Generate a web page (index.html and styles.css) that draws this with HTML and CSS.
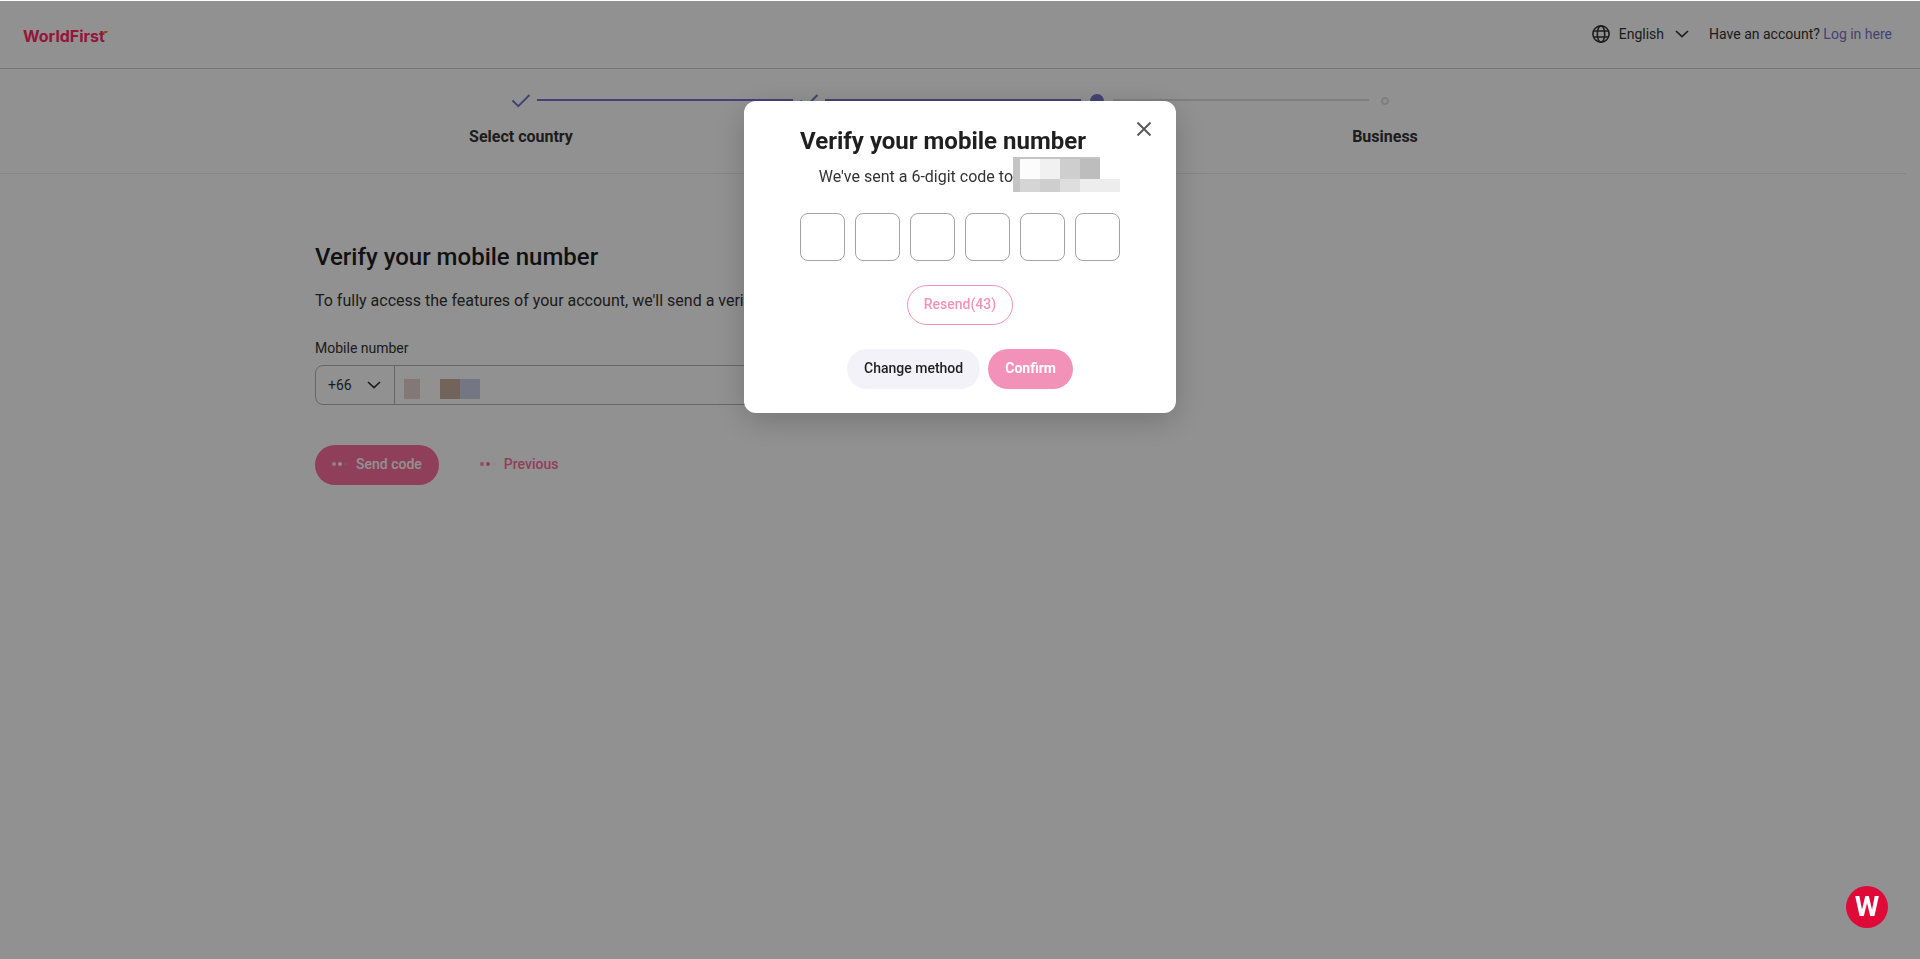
FILE: index.html
```html
<!DOCTYPE html>
<html lang="en">
<head>
    <meta charset="UTF-8">
    <meta name="viewport" content="width=device-width, initial-scale=1.0">
    <title>WorldFirst</title>
    <link rel="stylesheet" href="styles.css">
</head>
<body>
    <!-- Header -->
    <header class="header">
        <a class="logo" href="#" aria-label="WorldFirst">
            <span class="logo-text">WorldFirst</span>
            <svg class="logo-tick" width="6" height="3" viewBox="0 0 6 3" aria-hidden="true"><path d="M0 3 Q1 0 3 0 H6 L5 2 Q3 2 0 3 Z" fill="#f08a1c"/></svg>
        </a>
        <div class="header-right">
            <button class="language" type="button">
                <svg width="18" height="18" viewBox="0 0 18 18" fill="none" stroke="currentColor" stroke-width="1.6" aria-hidden="true">
                    <circle cx="9" cy="9" r="8.1"/>
                    <ellipse cx="9" cy="9" rx="3.7" ry="8.1"/>
                    <path d="M1.6 6h14.8M1.6 12h14.8"/>
                </svg>
                <span>English</span>
                <svg class="chevron" width="14" height="8" viewBox="0 0 14 8" fill="none" stroke="currentColor" stroke-width="1.7" aria-hidden="true"><path d="M1 1l6 5.6L13 1"/></svg>
            </button>
            <p class="login">Have an account? <a href="#">Log in here</a></p>
        </div>
    </header>

    <!-- Steps -->
    <nav class="steps" aria-label="Progress">
        <ol class="step-list">
            <li class="step">
                <div class="step-icon">
                    <svg width="20" height="14" viewBox="0 0 20 14" fill="none" stroke="#7a73cc" stroke-width="2" aria-hidden="true"><path d="M1.5 6.5l5.8 5.6L18.5 1"/></svg>
                    <span class="step-line done"></span>
                </div>
                <span class="step-label">Select country</span>
            </li>
            <li class="step">
                <div class="step-icon">
                    <svg width="20" height="14" viewBox="0 0 20 14" fill="none" stroke="#7a73cc" stroke-width="2" aria-hidden="true"><path d="M1.5 6.5l5.8 5.6L18.5 1"/></svg>
                    <span class="step-line done"></span>
                </div>
            </li>
            <li class="step">
                <div class="step-icon">
                    <span class="dot-current"></span>
                    <span class="step-line"></span>
                </div>
            </li>
            <li class="step">
                <div class="step-icon">
                    <span class="dot-next"></span>
                </div>
                <span class="step-label">Business</span>
            </li>
        </ol>
    </nav>

    <!-- Form -->
    <main class="content">
        <h1>Verify your mobile number</h1>
        <p class="intro">To fully access the features of your account, we'll send a verification code to your mobile.</p>
        <form>
            <label class="field-label" for="mobile">Mobile number</label>
            <div class="phone">
                <div class="phone-code">
                    <select aria-label="Country code">
                        <option>+66</option>
                    </select>
                    <svg class="chevron" width="14" height="8" viewBox="0 0 14 8" fill="none" stroke="currentColor" stroke-width="1.7" aria-hidden="true"><path d="M1 1l6 5.6L13 1"/></svg>
                </div>
                <div class="phone-number">
                    <input id="mobile" type="tel">
                    <svg class="phone-mask" width="76" height="20" viewBox="0 0 76 20" aria-hidden="true">
                        <path fill="#e5d3ce" d="M0 0h16v20H0z"/>
                        <path fill="#cab0a1" d="M36 0h20v20H36z"/>
                        <path fill="#cccfe8" d="M56 0h20v20H56z"/>
                    </svg>
                </div>
            </div>
            <div class="form-actions">
                <button class="btn btn-send" type="button"><span class="loading"><i></i><i></i><i></i></span>Send code</button>
                <button class="btn btn-previous" type="button"><span class="loading"><i></i><i></i><i></i></span>Previous</button>
            </div>
        </form>
    </main>

    <!-- Modal -->
    <div class="overlay">
        <div class="modal" role="dialog" aria-modal="true" aria-labelledby="modal-title">
            <button class="close" type="button" aria-label="Close">
                <svg width="16" height="16" viewBox="0 0 16 16" fill="none" stroke="currentColor" stroke-width="1.8" aria-hidden="true"><path d="M1.5 1.5l13 13M14.5 1.5l-13 13"/></svg>
            </button>
            <h2 id="modal-title">Verify your mobile number</h2>
            <p class="sent">We've sent a 6-digit code to
                <svg width="107" height="35" viewBox="0 0 107 35" aria-hidden="true">
                    <path fill="#c4c4c4" d="M0 0h87v20H7v15H0z"/>
                    <path fill="#fcfcfc" d="M7 2h20v20H7z"/>
                    <path fill="#f1f1f1" d="M27 2h20v20H27z"/>
                    <path fill="#cecece" d="M47 2h20v20H47z"/>
                    <path fill="#bdbdbd" d="M67 2h20v20H67z"/>
                    <path fill="#d5d5d5" d="M7 22h20v13H7z"/>
                    <path fill="#cecece" d="M27 22h20v13H27z"/>
                    <path fill="#dedede" d="M47 22h20v13H47z"/>
                    <path fill="#ededed" d="M67 22h40v13H67z"/>
                </svg>
            </p>
            <div class="code">
                <input type="text" maxlength="1" inputmode="numeric" aria-label="Digit 1">
                <input type="text" maxlength="1" inputmode="numeric" aria-label="Digit 2">
                <input type="text" maxlength="1" inputmode="numeric" aria-label="Digit 3">
                <input type="text" maxlength="1" inputmode="numeric" aria-label="Digit 4">
                <input type="text" maxlength="1" inputmode="numeric" aria-label="Digit 5">
                <input type="text" maxlength="1" inputmode="numeric" aria-label="Digit 6">
            </div>
            <button class="btn btn-resend" type="button">Resend(43)</button>
            <div class="modal-actions">
                <button class="btn btn-change" type="button">Change method</button>
                <button class="btn btn-confirm" type="button">Confirm</button>
            </div>
        </div>
    </div>

    <button class="chat" type="button" aria-label="Help">W</button>
</body>
</html>
```
FILE: styles.css
```css
/* General Styles */
* {
    box-sizing: border-box;
}

body {
    font-family: Roboto, Arial, sans-serif;
    font-size: 14px;
    margin: 0;
    padding-top: 1px;
    background-color: #fff;
    color: #333;
}

h1, h2, p, ol {
    margin: 0;
    padding: 0;
}

button, input, select {
    font: inherit;
    color: inherit;
}

/* Header */
.header {
    display: flex;
    justify-content: space-between;
    align-items: center;
    height: 68px;
    padding: 0 28px 0 23px;
    border-bottom: 1px solid #d0d0d0;
}

.logo {
    display: flex;
    align-items: flex-start;
    padding-top: 2px;
    color: #ff2a68;
    text-decoration: none;
}

.logo-text {
    font-family: Inter, sans-serif;
    font-size: 16px;
    font-weight: 700;
    line-height: 18px;
}

.logo-tick {
    margin: 4px 0 0 -3px;
}

.header-right {
    display: flex;
    align-items: center;
    gap: 20px;
    padding-bottom: 1px;
    line-height: 20px;
}

.language {
    display: flex;
    align-items: center;
    gap: 9px;
    padding: 0;
    background: none;
    border: none;
}

.language .chevron {
    margin-left: 2px;
}

.login a {
    color: #7a73cc;
    text-decoration: none;
}

/* Steps */
.steps {
    margin-right: 14px;
    padding: 20px 0 24px;
    border-bottom: 1px solid #ececec;
}

.step-list {
    display: flex;
    justify-content: center;
    list-style: none;
}

.step {
    width: 288px;
    height: 60px;
    text-align: center;
}

.step-icon {
    position: relative;
    display: flex;
    justify-content: center;
    align-items: center;
    height: 24px;
}

.step-line {
    position: absolute;
    left: calc(50% + 16px);
    top: 10px;
    width: 256px;
    height: 2px;
    background-color: #dfdfdf;
}

.step-line.done {
    background-color: #7a73cc;
}

.dot-current {
    width: 14px;
    height: 14px;
    border-radius: 50%;
    background-color: #7a73cc;
}

.dot-next {
    width: 8px;
    height: 8px;
    border: 2px solid #dfdfdf;
    border-radius: 50%;
}

.step-label {
    display: block;
    margin-top: 12px;
    font-size: 16px;
    font-weight: 700;
    line-height: 24px;
}

/* Form */
.content {
    max-width: 1290px;
    margin: 0 auto;
    padding: 67px 0 0;
}

.content h1 {
    font-size: 24px;
    font-weight: 500;
    line-height: 32px;
    color: #1f1f1f;
}

.intro {
    margin-top: 16px;
    font-size: 16px;
    line-height: 24px;
}

.field-label {
    display: block;
    margin-top: 23px;
    line-height: 24px;
}

.phone {
    display: flex;
    width: 640px;
    height: 40px;
    margin-top: 5px;
    border: 1px solid #b4b4b4;
    border-radius: 8px;
}

.phone-code {
    display: flex;
    align-items: center;
    width: 79px;
    padding: 0 13px 0 12px;
    border-right: 1px solid #b4b4b4;
}

.phone-code select {
    flex: 1;
    min-width: 0;
    padding: 0;
    background: none;
    border: none;
    appearance: none;
}

.phone-number {
    position: relative;
    flex: 1;
}

.phone-number input {
    width: 100%;
    height: 100%;
    padding: 0 9px;
    background: none;
    border: none;
}

.phone-mask {
    position: absolute;
    left: 9px;
    top: 13px;
}

.form-actions {
    display: flex;
    gap: 24px;
    margin-top: 40px;
}

.btn {
    display: flex;
    align-items: center;
    height: 40px;
    padding: 0 17px 2px;
    border: none;
    border-radius: 20px;
    font-weight: 500;
}

.btn-send {
    background-color: #fd6fa0;
    color: #fff;
}

.btn-previous {
    background: none;
    color: #fd6fa0;
}

.loading {
    display: flex;
    gap: 2px;
    margin-right: 8px;
}

.loading i {
    width: 4px;
    height: 4px;
    border-radius: 50%;
    background-color: currentColor;
}

.loading i:first-child {
    opacity: 0.8;
}

.loading i:last-child {
    opacity: 0.1;
}

/* Modal */
.overlay {
    position: fixed;
    inset: 1px 0 0;
    padding-top: 100px;
    background-color: rgba(0, 0, 0, 0.43);
}

.modal {
    position: relative;
    display: flex;
    flex-direction: column;
    align-items: center;
    width: 432px;
    margin: 0 auto;
    padding: 24px 56px;
    background-color: #fff;
    border-radius: 12px;
    box-shadow: 0 8px 32px rgba(0, 0, 0, 0.2);
}

.modal h2 {
    align-self: flex-start;
    font-size: 24px;
    font-weight: 700;
    line-height: 32px;
    color: #1f1f1f;
}

.sent {
    display: flex;
    align-self: flex-end;
    align-items: flex-end;
    font-size: 16px;
    line-height: 30px;
}

.close {
    position: absolute;
    top: 20px;
    right: 24px;
    display: flex;
    padding: 0;
    background: none;
    border: none;
    color: #555;
}

.code {
    display: flex;
    gap: 10px;
    margin-top: 21px;
}

.code input {
    width: 45px;
    height: 48px;
    border: 1px solid #a3a3a3;
    border-radius: 8px;
    text-align: center;
}

.btn-resend {
    margin-top: 24px;
    padding: 0 16px 2px;
    background: none;
    border: 1px solid #f392b8;
    color: #f392b8;
}

.modal-actions {
    display: flex;
    gap: 8px;
    margin-top: 24px;
}

.btn-change {
    background-color: #f3f2f8;
    color: #1f1f1f;
}

.btn-confirm {
    background-color: #f392b8;
    color: #fff;
    font-weight: 700;
}

/* Chat button */
.chat {
    position: fixed;
    right: 32px;
    bottom: 31px;
    width: 42px;
    height: 42px;
    padding: 0;
    border: none;
    border-radius: 50%;
    background-color: #e00a38;
    color: #fff;
    font-size: 28px;
    font-weight: 700;
    line-height: 42px;
}
```
